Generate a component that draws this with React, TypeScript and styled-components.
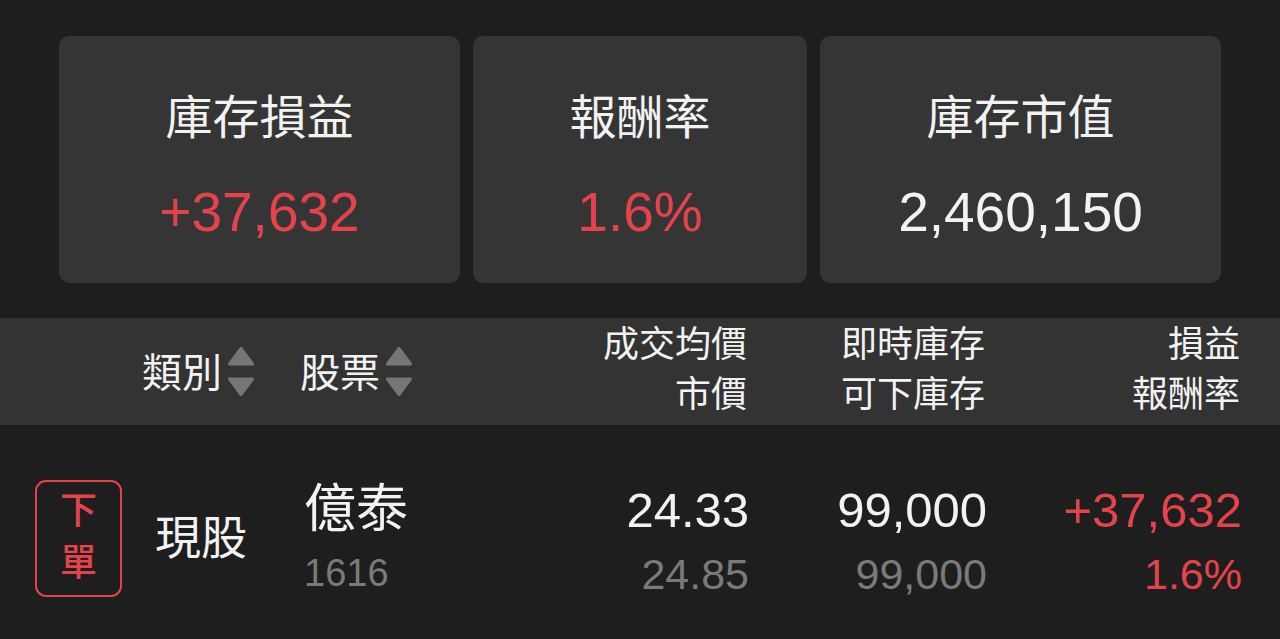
import styled, { createGlobalStyle } from 'styled-components';

const colors = {
  page: '#1e1e1e',
  card: '#353535',
  header: '#333333',
  text: '#f2f2f2',
  muted: '#7a7a7a',
  arrow: '#767676',
  red: '#e5434b',
};

const GlobalStyle = createGlobalStyle`
  html, body {
    margin: 0;
    padding: 0;
    background: ${colors.page};
  }
  body {
    font-family: 'Liberation Sans', 'Noto Sans CJK TC', sans-serif;
    color: ${colors.text};
  }
`;

const summary = [
  { label: '庫存損益', value: '+37,632', red: true },
  { label: '報酬率', value: '1.6%', red: true },
  { label: '庫存市值', value: '2,460,150', red: false },
];

const SortArrows = () => (
  <svg width="26" height="49" viewBox="0 0 26 49">
    <g fill={colors.arrow} stroke={colors.arrow} strokeWidth="3" strokeLinejoin="round">
      <polygon points="13,1.5 1.5,17 24.5,17" />
      <polygon points="1.5,32 24.5,32 13,47.5" />
    </g>
  </svg>
);

export default function App() {
  return (
    <Page>
      <GlobalStyle />
      <Summary>
        {summary.map((s) => (
          <Card key={s.label}>
            <CardLabel>{s.label}</CardLabel>
            <CardValue $red={s.red}>{s.value}</CardValue>
          </Card>
        ))}
      </Summary>

      <HeaderRow>
        <Cell />
        <Cell $inset={12}>
          <SortLabel>
            類別
            <SortArrows />
          </SortLabel>
        </Cell>
        <Cell $inset={10}>
          <SortLabel>
            股票
            <SortArrows />
          </SortLabel>
        </Cell>
        <HeaderStack>
          <span>成交均價</span>
          <span>市價</span>
        </HeaderStack>
        <HeaderStack>
          <span>即時庫存</span>
          <span>可下庫存</span>
        </HeaderStack>
        <HeaderStack>
          <span>損益</span>
          <span>報酬率</span>
        </HeaderStack>
      </HeaderRow>

      <DataRow>
        <Cell $inset={35}>
          <OrderButton>
            <span>下</span>
            <span>單</span>
          </OrderButton>
        </Cell>
        <Cell $inset={25}>
          <TypeText>現股</TypeText>
        </Cell>
        <Cell $inset={14}>
          <StockStack>
            <StockName>億泰</StockName>
            <StockCode>1616</StockCode>
          </StockStack>
        </Cell>
        <ValueStack>
          <MainValue>24.33</MainValue>
          <SubValue>24.85</SubValue>
        </ValueStack>
        <ValueStack>
          <MainValue>99,000</MainValue>
          <SubValue>99,000</SubValue>
        </ValueStack>
        <ValueStack>
          <MainValue $red>+37,632</MainValue>
          <SubValue $red>1.6%</SubValue>
        </ValueStack>
      </DataRow>
    </Page>
  );
}

const Page = styled.div`
  width: 1280px;
  min-height: 639px;
  background: ${colors.page};
  padding-top: 36px;
  box-sizing: border-box;
`;

const Summary = styled.div`
  display: grid;
  grid-template-columns: 401px 334px 401px;
  gap: 13px;
  padding: 0 59px;
`;

const Card = styled.div`
  height: 247px;
  background: ${colors.card};
  border-radius: 10px;
  display: flex;
  flex-direction: column;
  align-items: center;
  padding-top: 52px;
  box-sizing: border-box;
`;

const CardLabel = styled.div`
  font-size: 47px;
  line-height: 60px;
  color: ${colors.text};
`;

const CardValue = styled.div<{ $red?: boolean }>`
  margin-top: 34px;
  font-size: 55px;
  line-height: 60px;
  color: ${(p) => (p.$red ? colors.red : colors.text)};
`;

const rowColumns = `
  display: grid;
  grid-template-columns: 130px 160px 160px 1fr 238px 255px;
  padding-right: 38px;
`;

const HeaderRow = styled.div`
  ${rowColumns}
  margin-top: 35px;
  height: 107px;
  background: ${colors.header};
  align-items: center;
`;

const Cell = styled.div<{ $inset?: number }>`
  display: flex;
  align-items: center;
  padding-left: ${(p) => p.$inset ?? 0}px;
`;

const SortLabel = styled.div`
  display: flex;
  align-items: center;
  gap: 6px;
  font-size: 40px;
  line-height: 50px;
  color: ${colors.text};
  padding-top: 3px;

  svg {
    margin-top: -3px;
  }
`;

const HeaderStack = styled.div`
  display: flex;
  flex-direction: column;
  align-items: flex-end;
  padding-right: 2px;
  font-size: 36px;
  line-height: 50px;
  color: ${colors.text};
  margin-top: -3px;
`;

const DataRow = styled.div`
  ${rowColumns}
  height: 214px;
  align-items: center;
  padding-top: 12px;
  box-sizing: border-box;
`;

const OrderButton = styled.div`
  width: 87px;
  height: 117px;
  box-sizing: border-box;
  border: 2px solid ${colors.red};
  border-radius: 11px;
  display: flex;
  flex-direction: column;
  align-items: center;
  justify-content: center;
  color: ${colors.red};
  font-size: 37px;
  font-weight: 500;
  line-height: 52px;
`;

const TypeText = styled.div`
  font-size: 46px;
  line-height: 60px;
  color: ${colors.text};
`;

const StockStack = styled.div`
  display: flex;
  flex-direction: column;
  align-items: flex-start;
  margin-top: 6px;
`;

const StockName = styled.div`
  font-size: 52px;
  line-height: 64px;
  color: ${colors.text};
`;

const StockCode = styled.div`
  font-size: 38px;
  line-height: 64px;
  color: ${colors.muted};
`;

const ValueStack = styled.div`
  display: flex;
  flex-direction: column;
  align-items: flex-end;
  margin-top: 8px;
`;

const MainValue = styled.div<{ $red?: boolean }>`
  font-size: 49px;
  line-height: 64px;
  color: ${(p) => (p.$red ? colors.red : colors.text)};
`;

const SubValue = styled.div<{ $red?: boolean }>`
  font-size: 43px;
  line-height: 64px;
  color: ${(p) => (p.$red ? colors.red : colors.muted)};
`;
